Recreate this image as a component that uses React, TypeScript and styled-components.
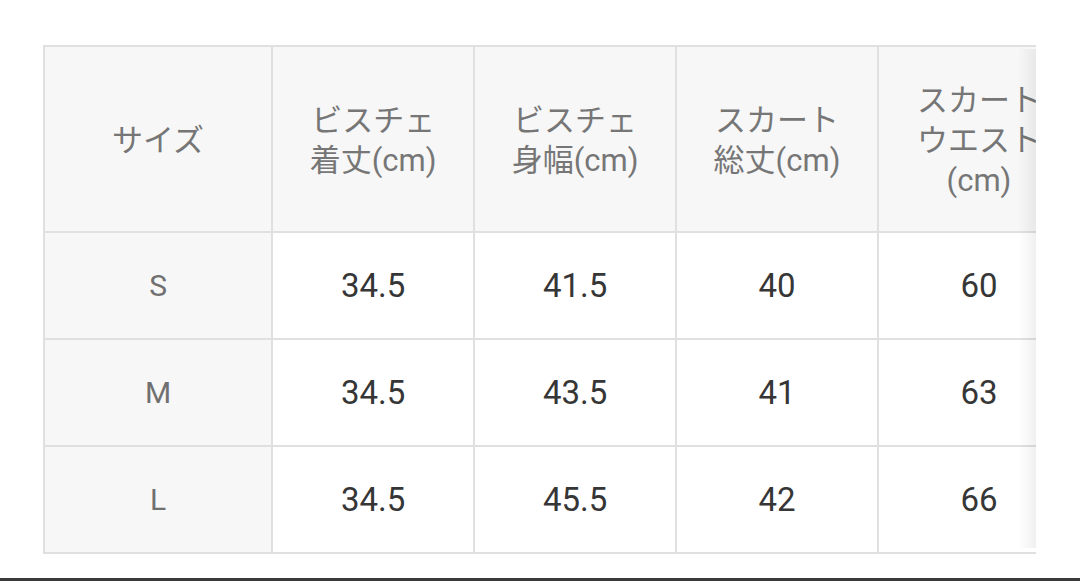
import React from "react";
import styled, { createGlobalStyle } from "styled-components";

const GlobalStyle = createGlobalStyle`
  html, body {
    margin: 0;
    padding: 0;
    background: #ffffff;
  }
  body {
    width: 1080px;
    height: 581px;
    overflow: hidden;
    font-family: Roboto, "Noto Sans CJK JP", sans-serif;
  }
`;

const Page = styled.div`
  width: 1080px;
  height: 581px;
  display: flex;
  flex-direction: column;
  box-sizing: border-box;
`;

const Content = styled.div`
  flex: 1;
  padding: 45px 0 0 43px;
`;

const ScrollBox = styled.div`
  position: relative;
  width: 993px;
  overflow: hidden;

  &::after {
    content: "";
    position: absolute;
    top: 4px;
    bottom: 6px;
    right: 0;
    width: 18px;
    background: linear-gradient(to right, rgba(0, 0, 0, 0), rgba(0, 0, 0, 0.06));
    pointer-events: none;
  }
`;

const Table = styled.table`
  border-collapse: collapse;
  table-layout: fixed;
  width: 1038px;
`;

const HeadCell = styled.th<{ $w: number }>`
  width: ${(p) => p.$w}px;
  height: 186px;
  padding: 3px 0 0;
  box-sizing: border-box;
  border: 2px solid #e0e0e0;
  background: #f7f7f7;
  color: #767676;
  font-family: Roboto, "Noto Sans CJK JP", sans-serif;
  font-weight: 400;
  font-size: 31px;
  line-height: 40px;
  text-align: center;
  vertical-align: middle;
`;

const SizeCell = styled.th`
  height: 105px;
  padding: 0;
  border: 2px solid #e0e0e0;
  background: #f7f7f7;
  color: #707070;
  font-family: Roboto, sans-serif;
  font-weight: 400;
  font-size: 30px;
  text-align: center;
  vertical-align: middle;
`;

const ValueCell = styled.td`
  height: 105px;
  padding: 0;
  border: 2px solid #e0e0e0;
  background: #ffffff;
  color: #363636;
  font-family: Roboto, sans-serif;
  font-size: 33px;
  text-align: center;
  vertical-align: middle;
`;

const Line = styled.span`
  display: block;
  white-space: nowrap;
`;

const BottomBar = styled.div`
  height: 3px;
  background: #3a3a3a;
`;

const headers: { w: number; lines: string[] }[] = [
  { w: 226, lines: ["サイズ"] },
  { w: 200, lines: ["ビスチェ", "着丈(cm)"] },
  { w: 200, lines: ["ビスチェ", "身幅(cm)"] },
  { w: 200, lines: ["スカート", "総丈(cm)"] },
  { w: 200, lines: ["スカート", "ウエスト", "(cm)"] },
];

const rows: { size: string; values: string[] }[] = [
  { size: "S", values: ["34.5", "41.5", "40", "60"] },
  { size: "M", values: ["34.5", "43.5", "41", "63"] },
  { size: "L", values: ["34.5", "45.5", "42", "66"] },
];

export default function App() {
  return (
    <>
      <GlobalStyle />
      <Page>
        <Content>
          <ScrollBox>
            <Table>
              <thead>
                <tr>
                  {headers.map((h, i) => (
                    <HeadCell key={i} $w={h.w}>
                      {h.lines.map((l, j) => (
                        <Line key={j}>{l}</Line>
                      ))}
                    </HeadCell>
                  ))}
                </tr>
              </thead>
              <tbody>
                {rows.map((r) => (
                  <tr key={r.size}>
                    <SizeCell>{r.size}</SizeCell>
                    {r.values.map((v, i) => (
                      <ValueCell key={i}>{v}</ValueCell>
                    ))}
                  </tr>
                ))}
              </tbody>
            </Table>
          </ScrollBox>
        </Content>
        <BottomBar />
      </Page>
    </>
  );
}
